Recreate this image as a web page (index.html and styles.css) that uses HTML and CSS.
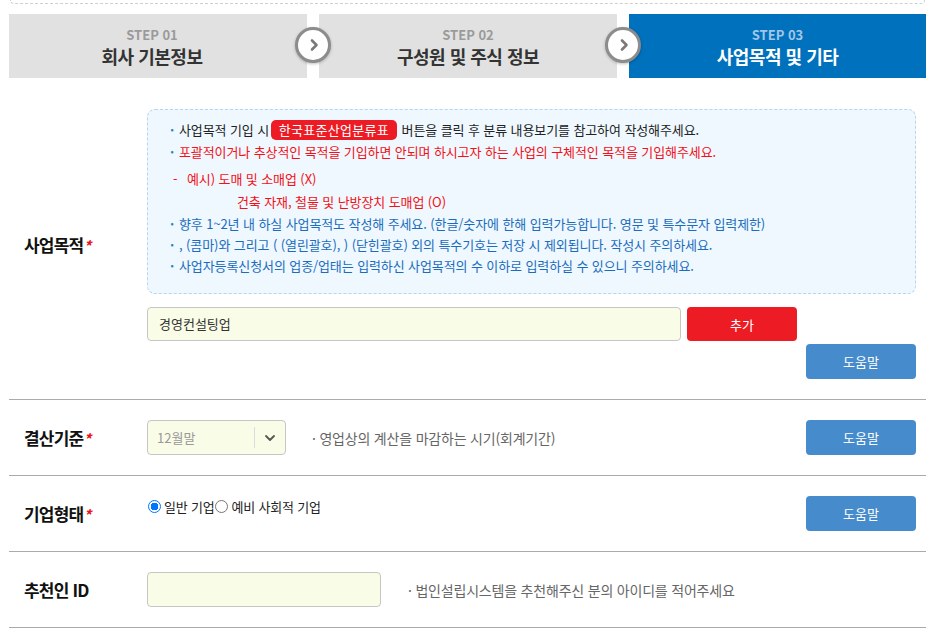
FILE: index.html
```html
<!DOCTYPE html>
<html lang="ko">
<head>
<meta charset="utf-8">
<link rel="stylesheet" href="styles.css">
</head>
<body>
<div class="page">
  <div class="topbox"></div>
  <div class="steps">
    <div class="step step-first">
      <span class="step-no">STEP 01</span>
      <span class="step-title">회사 기본정보</span>
      <span class="arrow"><svg width="14" height="14" viewBox="0 0 14 14"><path d="M5 2.5 L9.5 7 L5 11.5" fill="none" stroke="#7a7a7a" stroke-width="2.6" stroke-linecap="round" stroke-linejoin="round"/></svg></span>
    </div>
    <div class="step">
      <span class="step-no">STEP 02</span>
      <span class="step-title">구성원 및 주식 정보</span>
      <span class="arrow"><svg width="14" height="14" viewBox="0 0 14 14"><path d="M5 2.5 L9.5 7 L5 11.5" fill="none" stroke="#7a7a7a" stroke-width="2.6" stroke-linecap="round" stroke-linejoin="round"/></svg></span>
    </div>
    <div class="step step-active">
      <span class="step-no">STEP 03</span>
      <span class="step-title">사업목적 및 기타</span>
    </div>
  </div>

  <div class="form">
    <div class="row">
      <div class="label">사업목적<em>*</em></div>
      <div class="field field-wide">
        <div class="info">
          <div class="li li-first"><span class="dot">·</span>사업목적 기입 시 <span class="badge">한국표준산업분류표</span> 버튼을 클릭 후 분류 내용보기를 참고하여 작성해주세요.</div>
          <div class="li red"><span class="dot">·</span>포괄적이거나 추상적인 목적을 기입하면 안되며 하시고자 하는 사업의 구체적인 목적을 기입해주세요.</div>
          <div class="example red">
            <div class="ex-line"><span class="dash">-</span>예시) 도매 및 소매업 (X)</div>
            <div class="ex-line ex-indent">건축 자재, 철물 및 난방장치 도매업 (O)</div>
          </div>
          <div class="li blue"><span class="dot">·</span>향후 1~2년 내 하실 사업목적도 작성해 주세요. (한글/숫자에 한해 입력가능합니다. 영문 및 특수문자 입력제한)</div>
          <div class="li blue"><span class="dot">·</span>, (콤마)와 그리고 ( (열린괄호), ) (닫힌괄호) 외의 특수기호는 저장 시 제외됩니다. 작성시 주의하세요.</div>
          <div class="li blue"><span class="dot">·</span>사업자등록신청서의 업종/업태는 입력하신 사업목적의 수 이하로 입력하실 수 있으니 주의하세요.</div>
        </div>
        <div class="input-line">
          <div class="text-input purpose-input">경영컨설팅업</div>
          <button class="btn btn-add">추가</button>
        </div>
        <div class="help-line">
          <button class="btn btn-help">도움말</button>
        </div>
      </div>
    </div>

    <div class="row">
      <div class="label">결산기준<em>*</em></div>
      <div class="field field-inline">
        <div class="select">
          <span class="select-value">12월말</span>
          <span class="select-arrow"><svg width="12" height="8" viewBox="0 0 12 8"><path d="M2 2 L6 6 L10 2" fill="none" stroke="#555" stroke-width="1.8" stroke-linecap="round" stroke-linejoin="round"/></svg></span>
        </div>
        <span class="note">· 영업상의 계산을 마감하는 시기(회계기간)</span>
      </div>
      <button class="btn btn-help">도움말</button>
    </div>

    <div class="row">
      <div class="label">기업형태<em>*</em></div>
      <div class="field field-radio">
        <label class="radio"><span class="radio-circle checked"></span>일반 기업</label>
        <label class="radio"><span class="radio-circle"></span>예비 사회적 기업</label>
      </div>
      <button class="btn btn-help">도움말</button>
    </div>

    <div class="row">
      <div class="label">추천인 ID</div>
      <div class="field field-inline">
        <div class="text-input id-input"></div>
        <span class="note note-id">· 법인설립시스템을 추천해주신 분의 아이디를 적어주세요</span>
      </div>
    </div>
  </div>
</div>
</body>
</html>
```

FILE: styles.css
```css
* { box-sizing: border-box; }
html, body { margin: 0; padding: 0; background: #fff; }
body {
  font-family: "Noto Sans CJK KR", "Noto Sans", sans-serif;
  color: #222;
}
.page {
  width: 917px;
  margin-left: 9px;
}
.topbox {
  height: 4px;
  margin: 0 1px;
  border: 1px dashed #cfcfcf;
  border-top: none;
  border-radius: 0 0 8px 8px;
}
.steps {
  display: grid;
  grid-template-columns: 298px 298px 297px;
  gap: 12px;
  margin-top: 10px;
}
.step {
  position: relative;
  height: 64px;
  background: #e1e1e1;
  display: flex;
  flex-direction: column;
  align-items: center;
  padding-top: 12px;
}
.step-first { padding-right: 12px; }
.step-no {
  font-size: 13px;
  line-height: 17px;
  font-weight: 700;
  color: #9a9a9a;
}
.step-title {
  font-size: 18px;
  line-height: 26px;
  font-weight: 700;
  color: #333;
  letter-spacing: -0.5px;
}
.step-active { background: #0071bc; }
.step-active .step-no { color: #a3c6e6; }
.step-active .step-title { color: #fff; }
.arrow {
  position: absolute;
  right: -24px;
  top: 13px;
  width: 36px;
  height: 36px;
  border-radius: 50%;
  background: #fff;
  border: 3px solid #8c8c8c;
  box-shadow: 0 1px 3px rgba(0,0,0,0.25);
  display: flex;
  align-items: center;
  justify-content: center;
  z-index: 2;
}
.arrow svg { display: block; margin-left: 1px; }

.form { margin-top: 11px; }
.row {
  display: grid;
  grid-template-columns: 138px 1fr 110px;
  align-items: center;
  padding: 20px 10px 20px 0;
  border-bottom: 1px solid #aaa;
}
.label {
  padding-left: 15px;
  font-size: 17px;
  font-weight: 700;
  color: #111;
  letter-spacing: -0.8px;
  align-self: center;
}
.label em {
  font-style: italic;
  color: #e8141c;
  font-size: 15px;
  margin-left: 0;
}
.field-wide { grid-column: 2 / 4; }
.info {
  background: #eef8fe;
  border: 1px dashed #b5d6ee;
  border-radius: 8px;
  padding: 9px 10px 17px 22px;
  font-size: 13px;
  letter-spacing: -0.1px;
  white-space: nowrap;
}
.li { line-height: 21px; color: #222; }
.li-first { line-height: 22px; }
.dot {
  display: inline-block;
  width: 9px;
  color: #2a86b8;
  font-weight: 700;
}
.red { color: #f41016; }
.blue { color: #1b6cbd; }
.example { margin-top: 5px; }
.ex-line { line-height: 23px; padding-left: 3px; }
.dash { display: inline-block; width: 14px; }
.ex-indent { padding-left: 67px; }
.badge {
  display: inline-block;
  background: #ed1c24;
  color: #fff;
  border-radius: 5px;
  padding: 0 8px;
  line-height: 20px;
  letter-spacing: 0.3px;
  margin: 0 1px 0 -2px;
}
.input-line {
  display: flex;
  gap: 6px;
  margin-top: 13px;
}
.text-input {
  height: 34px;
  background: #f9fce6;
  border: 1px solid #c6c6c6;
  border-radius: 4px;
  font-size: 13px;
  line-height: 32px;
  color: #333;
  padding-left: 11px;
}
.purpose-input { width: 534px; }
.btn {
  font-family: inherit;
  border: none;
  color: #fff;
  font-size: 13px;
  border-radius: 4px;
  width: 110px;
  height: 35px;
  padding: 0;
  cursor: pointer;
}
.btn-add { background: #ed1c24; height: 34px; }
.btn-help { background: #468bcc; }
.help-line {
  display: flex;
  justify-content: flex-end;
  margin-top: 3px;
}
.field-inline {
  display: flex;
  align-items: center;
  min-height: 35px;
}
.select {
  width: 139px;
  height: 35px;
  background: #f9fce6;
  border: 1px solid #c6c6c6;
  border-radius: 4px;
  display: flex;
  align-items: center;
}
.select-value {
  flex: 1;
  padding-left: 9px;
  font-size: 13px;
  color: #999;
}
.select-arrow {
  width: 31px;
  height: 21px;
  border-left: 1px solid #dcdcdc;
  display: flex;
  align-items: center;
  justify-content: center;
}
.select-arrow svg { display: block; }
.note {
  margin-left: 26px;
  font-size: 14px;
  letter-spacing: -0.2px;
  color: #666;
}
.id-input { width: 234px; height: 35px; }
.note-id { margin-left: 27px; }
.field-radio {
  align-self: start;
  display: flex;
  align-items: center;
  height: 18px;
  margin-top: 1px;
  font-size: 13px;
  color: #222;
  letter-spacing: -0.2px;
}
.radio { display: flex; align-items: center; }
.radio-circle {
  display: inline-block;
  width: 13px;
  height: 13px;
  border-radius: 50%;
  border: 1px solid #767676;
  background: #fff;
  margin-right: 3px;
  margin-left: 1px;
}
.radio-circle.checked {
  border: 1.5px solid #0075ff;
  background: radial-gradient(circle, #0075ff 0 3.6px, #fff 4px);
}
```
